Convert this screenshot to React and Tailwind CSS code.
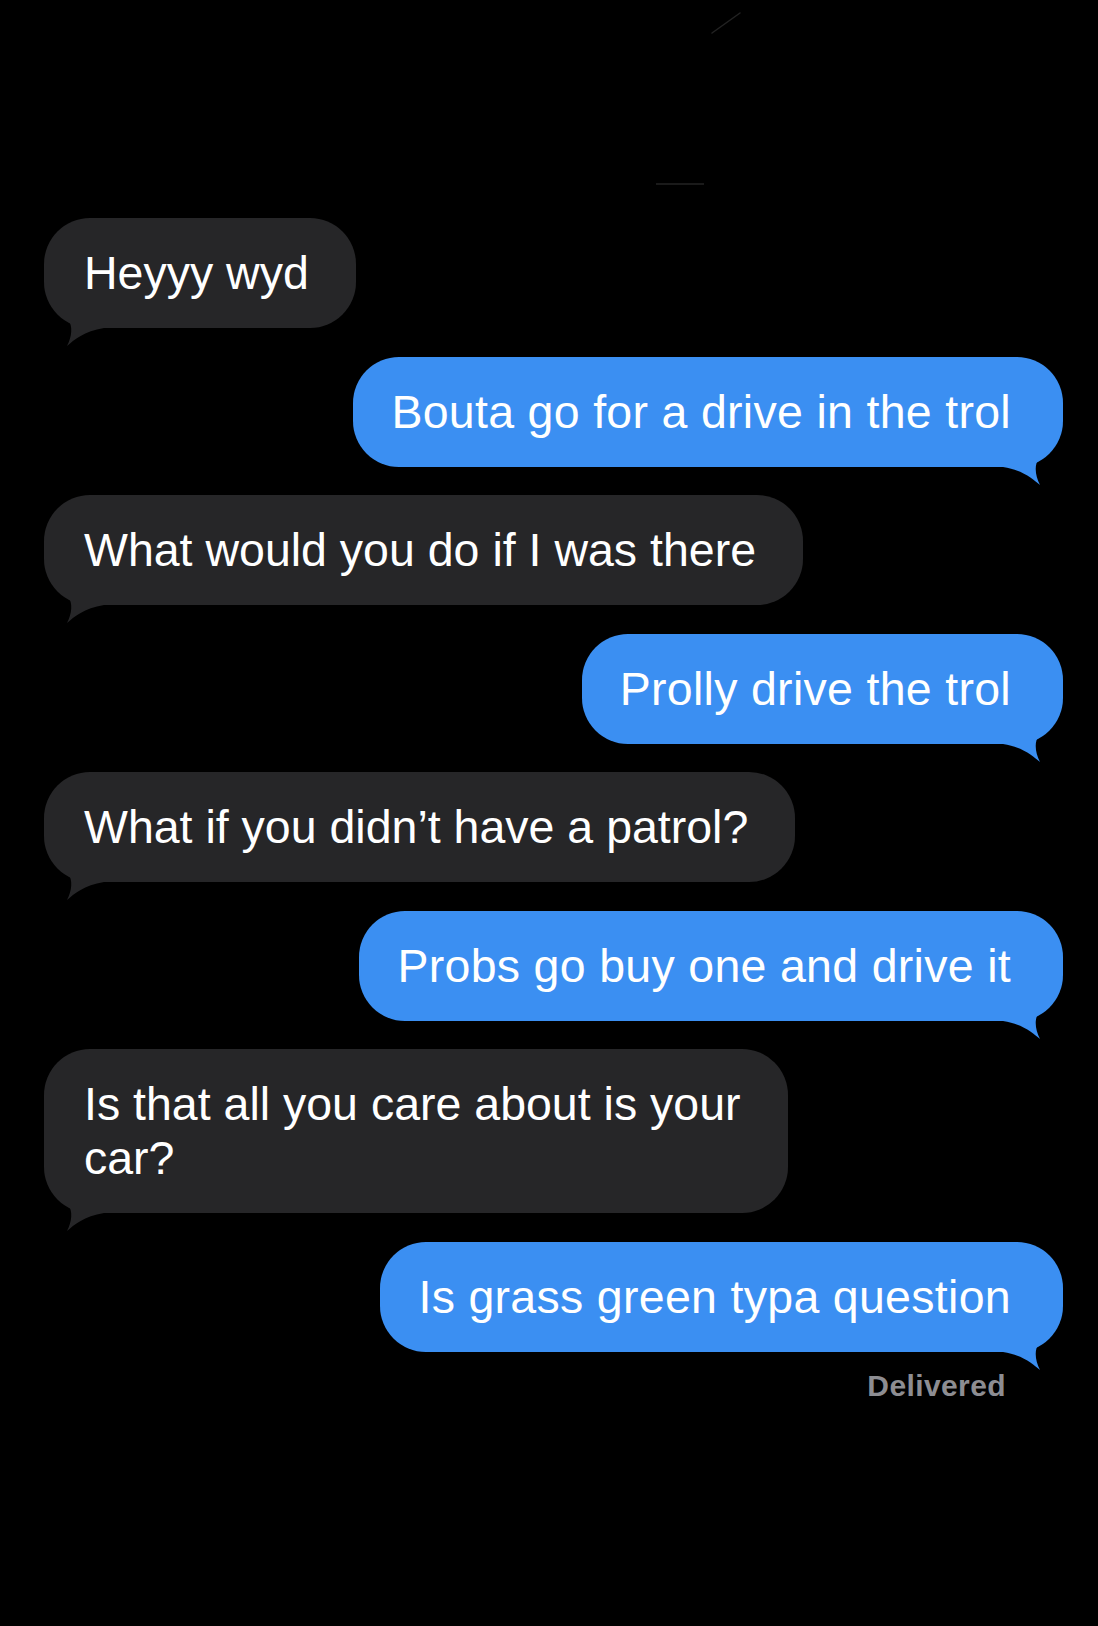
const messages = [
  { id: 1, from: "them", text: "Heyyy wyd" },
  { id: 2, from: "me", text: "Bouta go for a drive in the trol" },
  { id: 3, from: "them", text: "What would you do if I was there" },
  { id: 4, from: "me", text: "Prolly drive the trol" },
  { id: 5, from: "them", text: "What if you didn\u2019t have a patrol?" },
  { id: 6, from: "me", text: "Probs go buy one and drive it" },
  { id: 7, from: "them", text: "Is that all you care about is your\ncar?" },
  { id: 8, from: "me", text: "Is grass green typa question", status: "Delivered" },
];

function Tail({ side, color }) {
  if (side === "right") {
    return (
      <svg
        className="pointer-events-none absolute -bottom-[18px] right-0 h-[28px] w-[60px]"
        viewBox="0 0 60 28"
        aria-hidden="true"
      >
        <path d="M0 0 H36 V2 C31 7 32 19 37 28 C30 22 20 13 0 10 Z" fill={color} />
      </svg>
    );
  }
  return (
    <svg
      className="pointer-events-none absolute -bottom-[18px] left-0 h-[28px] w-[60px]"
      viewBox="0 0 60 28"
      aria-hidden="true"
    >
      <path d="M60 0 H24 V2 C29 7 28 19 23 28 C30 22 40 13 60 10 Z" fill={color} />
    </svg>
  );
}

function Bubble({ msg }) {
  const mine = msg.from === "me";
  if (mine) {
    return (
      <div className="flex flex-col items-end">
        <div className="relative whitespace-pre rounded-[46px] bg-[#3b8ff2] py-[28px] pl-[38px] pr-[52px] text-[46.5px] leading-[54px] tracking-[0.3px] text-white">
          {msg.text}
          <Tail side="right" color="#3b8ff2" />
        </div>
        {msg.status && (
          <p className="mr-[57px] mt-[16px] text-[30px] font-bold leading-[36px] tracking-[0.4px] text-[#8d8d92]">
            {msg.status}
          </p>
        )}
      </div>
    );
  }
  return (
    <div className="flex flex-col items-start">
      <div className="relative whitespace-pre rounded-[46px] bg-[#262628] py-[28px] pl-[40px] pr-[47px] text-[46.5px] leading-[54px] text-white">
        {msg.text}
        <Tail side="left" color="#262628" />
      </div>
    </div>
  );
}

export default function App() {
  return (
    <div className="min-h-[1626px] w-full bg-black font-['Liberation_Sans',Arial,sans-serif]">
      <svg className="block h-[218px] w-full" viewBox="0 0 1098 218" preserveAspectRatio="none" aria-hidden="true">
        <line x1="712" y1="33" x2="740" y2="13" stroke="#222" strokeWidth="1.5" strokeLinecap="round" />
        <line x1="656" y1="184" x2="704" y2="184" stroke="#1a1a1a" strokeWidth="2" />
      </svg>
      <div className="flex flex-col gap-[28.5px] pl-[44px] pr-[35px]">
        {messages.map((m) => (
          <Bubble key={m.id} msg={m} />
        ))}
      </div>
    </div>
  );
}
